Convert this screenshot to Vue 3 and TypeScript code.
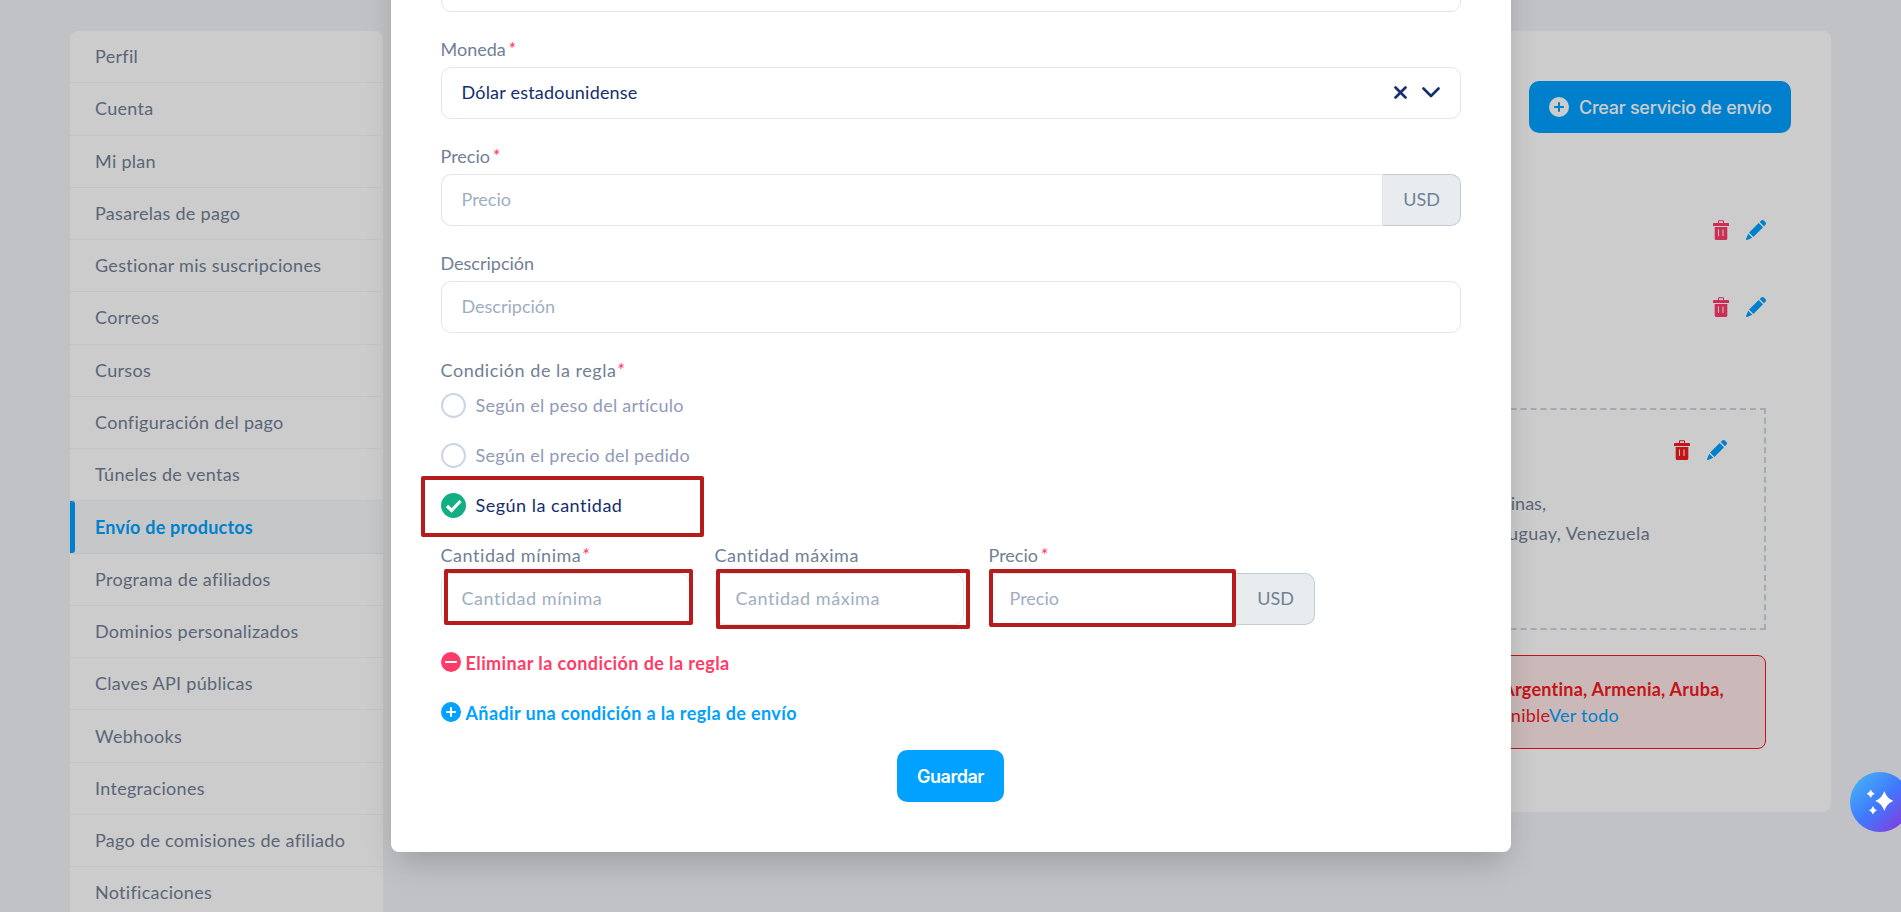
<template>
  <div class="page">
    <div class="layout">
      <nav class="sidebar">
        <a v-for="item in menu" :key="item" class="menu-item" :class="{ active: item === activeItem }">{{ item }}</a>
      </nav>

      <main class="card">
        <div class="card-header">
          <button class="btn create">
            <svg width="20" height="20" viewBox="0 0 20 20">
              <path fill="currentColor" fill-rule="evenodd" :d="plusCircle" />
            </svg>
            <span>Crear servicio de envío</span>
          </button>
        </div>

        <div v-for="n in 2" :key="n" class="actions">
          <svg class="trash pink" width="16" height="20" viewBox="0 0 16 20"><path :d="trashPath" fill-rule="evenodd" /></svg>
          <svg class="pencil" width="20" height="20" viewBox="0 0 20 20"><path :d="pencilPath" /></svg>
        </div>

        <div class="zone">
          <div class="actions">
            <svg class="trash red" width="16" height="20" viewBox="0 0 16 20"><path :d="trashPath" fill-rule="evenodd" /></svg>
            <svg class="pencil" width="20" height="20" viewBox="0 0 20 20"><path :d="pencilPath" /></svg>
          </div>
          <p class="countries first">Malvinas,</p>
          <p class="countries second">Uruguay, Venezuela</p>
        </div>

        <div class="alert">
          <p class="alert-names">Argentina, Armenia, Aruba,</p>
          <p class="alert-more">disponible<a>Ver todo</a></p>
        </div>
      </main>
    </div>

    <div class="overlay">
      <form class="modal" @submit.prevent>
        <div class="field">
          <input class="input" type="text" />
        </div>

        <div class="field">
          <label>Moneda<i>*</i></label>
          <div class="input select">
            <span>{{ currency }}</span>
            <svg class="clear" width="13" height="13" viewBox="0 0 13 13"><path d="M1.5 1.5l10 10M11.5 1.5l-10 10" /></svg>
            <svg class="chevron" width="18" height="11" viewBox="0 0 18 11"><path d="M1.5 1.5l7.5 7.5 7.5-7.5" /></svg>
          </div>
        </div>

        <div class="field">
          <label>Precio<i>*</i></label>
          <div class="group">
            <input class="input" type="text" placeholder="Precio" />
            <span class="addon">USD</span>
          </div>
        </div>

        <div class="field">
          <label>Descripción</label>
          <input class="input" type="text" placeholder="Descripción" />
        </div>

        <div class="field conditions">
          <label class="loose">Condición de la regla<i>*</i></label>
          <div v-for="(option, i) in options" :key="option" class="radio" :class="{ checked: selected === i }" @click="selected = i">
            <span class="dot">
              <svg v-if="selected === i" width="25" height="25" viewBox="0 0 25 25"><path d="M6 13l4.5 4.5 9-9.5" /></svg>
            </span>
            <span class="option-text">{{ option }}</span>
            <span v-if="i === 2" class="mark mark-option"></span>
          </div>
        </div>

        <div class="row">
          <div class="col">
            <label class="loose">Cantidad mínima<i>*</i></label>
            <input class="input loose" type="text" placeholder="Cantidad mínima" />
            <span class="mark mark-min"></span>
          </div>
          <div class="col">
            <label class="loose">Cantidad máxima</label>
            <input class="input loose" type="text" placeholder="Cantidad máxima" />
            <span class="mark mark-max"></span>
          </div>
          <div class="col wide">
            <label>Precio<i>*</i></label>
            <div class="group">
              <input class="input" type="text" placeholder="Precio" />
              <span class="addon">USD</span>
            </div>
            <span class="mark mark-price"></span>
          </div>
        </div>

        <a class="link remove">
          <svg width="20" height="20" viewBox="0 0 20 20">
            <circle cx="10" cy="10" r="10" fill="currentColor" />
            <path d="M5 10h10" stroke="#fff" stroke-width="2.2" stroke-linecap="round" />
          </svg>
          <span>Eliminar la condición de la regla</span>
        </a>
        <a class="link add">
          <svg width="20" height="20" viewBox="0 0 20 20">
            <path fill="currentColor" fill-rule="evenodd" :d="plusCircle" />
          </svg>
          <span>Añadir una condición a la regla de envío</span>
        </a>

        <button class="btn save">Guardar</button>
      </form>
    </div>

    <button class="assistant">
      <svg width="60" height="60" viewBox="0 0 60 60">
        <path :d="star(34.3, 29, 9, 10)" />
        <path :d="star(20.7, 21.7, 4, 4.3)" />
        <path :d="star(23, 38.3, 4, 4.3)" />
      </svg>
    </button>
  </div>
</template>

<script setup lang="ts">
import { ref } from 'vue'

const menu: string[] = [
  'Perfil',
  'Cuenta',
  'Mi plan',
  'Pasarelas de pago',
  'Gestionar mis suscripciones',
  'Correos',
  'Cursos',
  'Configuración del pago',
  'Túneles de ventas',
  'Envío de productos',
  'Programa de afiliados',
  'Dominios personalizados',
  'Claves API públicas',
  'Webhooks',
  'Integraciones',
  'Pago de comisiones de afiliado',
  'Notificaciones'
]
const activeItem = ref('Envío de productos')

const options: string[] = ['Según el peso del artículo', 'Según el precio del pedido', 'Según la cantidad']
const selected = ref(2)
const currency = ref('Dólar estadounidense')

const plusCircle =
  'M10 0a10 10 0 1 1 0 20a10 10 0 1 1 0-20zM9 5.9v3.1h-3.1a1 1 0 0 0 0 2h3.1v3.1a1 1 0 0 0 2 0v-3.1h3.1a1 1 0 0 0 0-2h-3.1v-3.1a1 1 0 0 0-2 0z'
const trashPath =
  'M5 3V1.2Q5 .3 6 .3h4q1 0 1 .9V3h4.2q.8 0 .8.8V6H0V3.800Q0 3 .8 3zM6 3h4V1.300H6zM1.700 7h12.600v11.500q0 1.500-1.500 1.500H3.200q-1.500 0-1.500-1.500zM5 9.500v6.500h1V9.500zM9.500 9.500v6.500h1V9.500z'
const pencilPath =
  'M13.700 2l1.500-1.400q1.400-1.200 2.800 0l1.400 1.400q1.200 1.400 0 2.800l-1.400 1.500zM12.700 3l4.300 4.300L7.400 16.900 3.100 12.600zM2.300 13.800l3.900 3.900L1.200 20Q0 20.200 0 19z'

// four-pointed star with curved sides
const star = (x: number, y: number, rx: number, ry: number): string => {
  const k = 0.26
  return (
    `M${x} ${y - ry}Q${x + rx * k} ${y - ry * k} ${x + rx} ${y}` +
    `Q${x + rx * k} ${y + ry * k} ${x} ${y + ry}` +
    `Q${x - rx * k} ${y + ry * k} ${x - rx} ${y}` +
    `Q${x - rx * k} ${y - ry * k} ${x} ${y - ry}z`
  )
}
</script>

<style>
body {
  margin: 0;
  overflow: hidden;
}
</style>

<style scoped>
* {
  box-sizing: border-box;
}

.page {
  position: relative;
  height: 912px;
  overflow: hidden;
  background: #f2f3f8;
  font-family: Lato, 'Open Sans', sans-serif;
  font-size: 18px;
  font-variant-ligatures: none;
  color: #718096;
}

p {
  margin: 0;
}

.layout {
  display: flex;
  align-items: flex-start;
  gap: 30px;
  padding: 31px 70px 0;
}

.sidebar {
  width: 313px;
  background: #fff;
  border-radius: 8px;
  overflow: hidden;
  letter-spacing: 0.3px;
}

.menu-item {
  display: flex;
  align-items: center;
  position: relative;
  height: 52.27px;
  padding: 0 0 1px 25px;
  border-bottom: 1px solid #f5f5f5;
  white-space: nowrap;
}

.menu-item.active {
  background: #f7f9fc;
  border-color: #edf2f4;
  color: #00a1ff;
  font-weight: 700;
  letter-spacing: 0.22px;
}

.menu-item.active::before {
  content: '';
  position: absolute;
  top: 0;
  bottom: 0;
  left: 0;
  width: 5px;
  border-radius: 0 3px 3px 0;
  background: #00a1ff;
}

.card {
  display: flex;
  flex-direction: column;
  width: 1418px;
  height: 781px;
  padding: 50px 65px 0 50px;
  background: #fff;
  border-radius: 8px;
}

.card-header {
  display: flex;
  justify-content: flex-end;
  margin: 0 -25px 87px 0;
}

.btn {
  height: 52px;
  border: 0;
  border-radius: 10px;
  background: #00a1ff;
  color: #fff;
  font-family: Inter, sans-serif;
  font-size: 18px;
  white-space: nowrap;
}

.create {
  display: flex;
  align-items: center;
  gap: 10px;
  width: 262px;
  padding: 0 20px;
  font-weight: 500;
  letter-spacing: -0.27px;
}

.create svg {
  flex: none;
}

.actions {
  display: flex;
  justify-content: flex-end;
  gap: 17px;
  margin-bottom: 57px;
}

.trash.pink {
  fill: #ff3b68;
}

.trash.red {
  fill: #f5191f;
}

.pencil {
  fill: #00a1ff;
}

.zone {
  height: 222px;
  margin: 34px 0 25px;
  padding: 30px 37px 0 0;
  border: 2px dashed #cbd5e0;
}

.zone .actions {
  margin-bottom: 28px;
}

.countries {
  line-height: 30px;
  text-align: right;
}

.countries.first {
  padding-right: 181px;
}

.countries.second {
  padding-right: 77px;
  letter-spacing: 0.4px;
}

.alert {
  height: 94px;
  padding: 20px 41px 0 0;
  border: 1px solid #f5191f;
  border-radius: 8px;
  background: #fde8e7;
  color: #f5191f;
  line-height: 26px;
  text-align: right;
}

.alert-names {
  font-weight: 700;
  letter-spacing: 0.25px;
}

.alert-more {
  padding-right: 105px;
  letter-spacing: 0.25px;
}

.alert-more a {
  color: #00a1ff;
}

.overlay {
  position: absolute;
  inset: 0;
  display: flex;
  justify-content: center;
  align-items: flex-start;
  background: rgba(0, 0, 0, 0.2);
}

.modal {
  display: flex;
  flex-direction: column;
  flex: none;
  width: 1120px;
  margin-top: -90px;
  padding: 50px;
  border-radius: 8px;
  background: #fff;
  box-shadow: 0 15px 32px -6px rgba(0, 0, 0, 0.2);
}

.field {
  margin-bottom: 28px;
}

label {
  display: block;
  height: 20px;
  margin-bottom: 7px;
  line-height: 18px;
  white-space: nowrap;
}

label i {
  margin-left: 2px;
  color: #ff3b68;
  font-size: 20px;
  line-height: 0;
}

.input {
  display: block;
  width: 100%;
  height: 52px;
  padding: 0 20px 2px;
  border: 1px solid #e2e6e9;
  border-radius: 10px;
  background: #fff;
  color: #162d6e;
  font: inherit;
  outline: none;
}

.loose {
  letter-spacing: 0.55px;
}

.loose i {
  margin-left: 0;
}

.input::placeholder {
  color: #a0aec0;
  opacity: 1;
}

.select {
  display: flex;
  align-items: center;
}

.select span {
  flex: 1;
  letter-spacing: 0.2px;
}

.select svg {
  fill: none;
  stroke: #162d6e;
  stroke-width: 2.6;
  stroke-linecap: round;
  stroke-linejoin: round;
}

.clear {
  margin-right: 15px;
}

.group {
  display: flex;
}

.group .input {
  flex: 1;
  width: auto;
  min-width: 0;
  border-right: 0;
  border-radius: 10px 0 0 10px;
}

.addon {
  display: flex;
  align-items: center;
  justify-content: center;
  width: 79px;
  height: 52px;
  padding: 0 0 2px 1px;
  border: 1px solid #c3ccd5;
  border-left-color: #e2e6e9;
  border-radius: 0 10px 10px 0;
  background: #e9ecef;
}

.conditions label {
  margin-bottom: 12px;
}

.radio {
  position: relative;
  display: flex;
  align-items: center;
  gap: 10px;
  height: 25px;
  margin-bottom: 25px;
  color: #8f9bb7;
}

.radio:last-child {
  margin-bottom: 0;
}

.radio.checked {
  color: #162d6e;
}

.option-text {
  padding-bottom: 2px;
  letter-spacing: 0.25px;
}

.checked .option-text {
  letter-spacing: 0.5px;
}

.dot {
  width: 25px;
  height: 25px;
  border: 2px solid #cbd5e4;
  border-radius: 50%;
}

.checked .dot {
  border: 0;
  background: #12ae84;
}

.dot svg {
  display: block;
  fill: none;
  stroke: #fff;
  stroke-width: 3.2;
}

.row {
  display: flex;
  gap: 25px;
}

.col {
  position: relative;
  width: 249px;
}

.col.wide {
  width: 326px;
}

/* highlighted areas */
.mark {
  position: absolute;
  border: 4px solid #b71c1c;
  border-radius: 2px;
  pointer-events: none;
}

.mark-option {
  top: -17px;
  left: -20px;
  width: 283px;
  height: 61px;
}

.mark-min {
  top: 23px;
  left: 3px;
  width: 249px;
  height: 56px;
}

.mark-max {
  top: 23px;
  left: 1px;
  width: 254px;
  height: 60px;
}

.mark-price {
  top: 23px;
  left: 0;
  width: 247px;
  height: 58px;
}

.link {
  display: flex;
  align-items: center;
  gap: 5px;
  height: 20px;
  font-weight: 700;
  letter-spacing: 0.38px;
}

.link span {
  padding-top: 2px;
}

.remove {
  margin-top: 27px;
  color: #ff3b68;
  letter-spacing: 0.42px;
}

.add {
  margin-top: 30px;
  color: #00a1ff;
}

.save {
  align-self: center;
  width: 107px;
  margin-top: 28px;
  padding: 0;
  font-weight: 600;
  letter-spacing: -0.5px;
}

.assistant {
  position: absolute;
  top: 772px;
  right: -9px;
  width: 60px;
  height: 60px;
  padding: 0;
  border: 0;
  border-radius: 50%;
  background: linear-gradient(135deg, #45aef5 10%, #4079ff 50%, #8a35d8 95%);
}

.assistant svg {
  display: block;
  fill: #fff;
}
</style>
